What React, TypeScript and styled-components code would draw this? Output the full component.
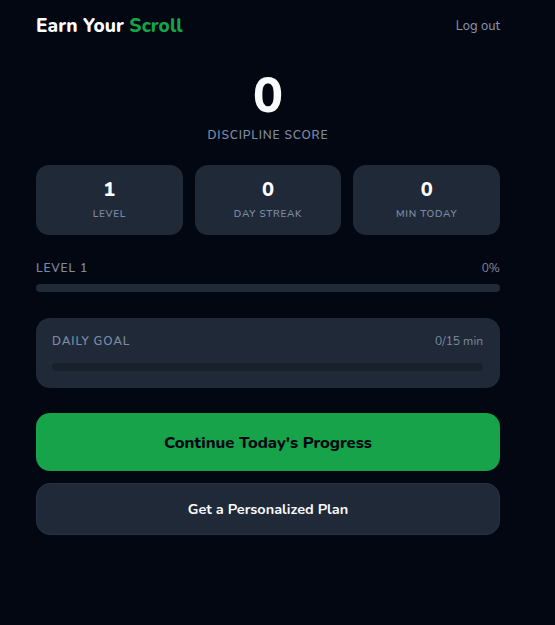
import React from "react";
import styled, { createGlobalStyle } from "styled-components";

const Global = createGlobalStyle`
  html, body { margin: 0; padding: 0; background: #030712; }
  body { font-family: "Nunito", "Lato", "Open Sans", sans-serif; color: #f8fafc; }
  * { box-sizing: border-box; }
`;

const Page = styled.div`
  min-height: 625px;
  background: #030712;
  padding: 15px 0 0 36px;
`;

const Container = styled.div`
  width: 464px;
  display: flex;
  flex-direction: column;
`;

const Header = styled.header`
  display: flex;
  justify-content: space-between;
  align-items: center;
  height: 22px;
`;

const Title = styled.h1`
  margin: 0;
  font-size: 19px;
  font-weight: 800;
  color: #ffffff;
  letter-spacing: 0.1px;
`;

const Accent = styled.span`
  color: #16a34a;
`;

const LogOut = styled.button`
  background: none;
  border: none;
  padding: 0;
  font-family: inherit;
  font-size: 13px;
  color: #8b96ab;
  cursor: pointer;
`;

const ScoreBlock = styled.section`
  display: flex;
  flex-direction: column;
  align-items: center;
  margin-top: 34px;
`;

const Score = styled.div`
  font-size: 50px;
  font-weight: 800;
  line-height: 1;
  color: #f8fafc;
`;

const Caption = styled.div<{ $size?: number }>`
  font-size: ${(p) => p.$size ?? 12}px;
  font-weight: 600;
  letter-spacing: 0.07em;
  text-transform: uppercase;
  color: #7d8aa3;
`;

const ScoreCaption = styled(Caption)`
  margin-top: 6px;
`;

const Stats = styled.div`
  display: grid;
  grid-template-columns: repeat(3, 1fr);
  gap: 12px;
  margin-top: 22px;
`;

const StatCard = styled.div`
  background: #1f2937;
  border-radius: 13px;
  height: 70px;
  display: flex;
  flex-direction: column;
  align-items: center;
  justify-content: center;
  gap: 7px;
`;

const StatValue = styled.div`
  font-size: 20px;
  font-weight: 800;
  line-height: 1;
  color: #ffffff;
`;

const Row = styled.div`
  display: flex;
  justify-content: space-between;
  align-items: center;
`;

const RightText = styled.span`
  font-size: 12px;
  color: #7d8aa3;
`;

const LevelSection = styled.section`
  margin-top: 25px;
  display: flex;
  flex-direction: column;
  gap: 8px;
`;

const Track = styled.div<{ $color: string }>`
  height: 8px;
  border-radius: 999px;
  background: ${(p) => p.$color};
  overflow: hidden;
`;

const Fill = styled.div`
  height: 100%;
  background: #16a34a;
  border-radius: 999px;
`;

const GoalCard = styled.section`
  margin-top: 26px;
  background: #1f2937;
  border-radius: 14px;
  padding: 15px 17px 16px 16px;
  display: flex;
  flex-direction: column;
  gap: 14px;
  height: 70px;
`;

const PrimaryButton = styled.button`
  margin-top: 25px;
  height: 58px;
  border: none;
  border-radius: 14px;
  background: #16a34a;
  color: #030712;
  font-family: inherit;
  font-size: 16.5px;
  font-weight: 800;
  cursor: pointer;
`;

const SecondaryButton = styled.button`
  margin-top: 12px;
  height: 52px;
  border: 1px solid #273244;
  border-radius: 14px;
  background: #1f2937;
  color: #f8fafc;
  font-family: inherit;
  font-size: 14.5px;
  font-weight: 700;
  cursor: pointer;
`;

const stats = [
  { value: "1", label: "Level" },
  { value: "0", label: "Day Streak" },
  { value: "0", label: "Min Today" },
];

export default function App() {
  const levelPct = 0;
  const goalPct = 0;
  return (
    <>
      <Global />
      <Page>
        <Container>
          <Header>
            <Title>
              Earn Your <Accent>Scroll</Accent>
            </Title>
            <LogOut>Log out</LogOut>
          </Header>

          <ScoreBlock>
            <Score>0</Score>
            <ScoreCaption>Discipline Score</ScoreCaption>
          </ScoreBlock>

          <Stats>
            {stats.map((s) => (
              <StatCard key={s.label}>
                <StatValue>{s.value}</StatValue>
                <Caption $size={10}>{s.label}</Caption>
              </StatCard>
            ))}
          </Stats>

          <LevelSection>
            <Row>
              <Caption>Level 1</Caption>
              <RightText>0%</RightText>
            </Row>
            <Track $color="#1f2937">
              <Fill style={{ width: `${levelPct}%` }} />
            </Track>
          </LevelSection>

          <GoalCard>
            <Row>
              <Caption>Daily Goal</Caption>
              <RightText>0/15 min</RightText>
            </Row>
            <Track $color="#18202c">
              <Fill style={{ width: `${goalPct}%` }} />
            </Track>
          </GoalCard>

          <PrimaryButton>Continue Today's Progress</PrimaryButton>
          <SecondaryButton>Get a Personalized Plan</SecondaryButton>
        </Container>
      </Page>
    </>
  );
}
